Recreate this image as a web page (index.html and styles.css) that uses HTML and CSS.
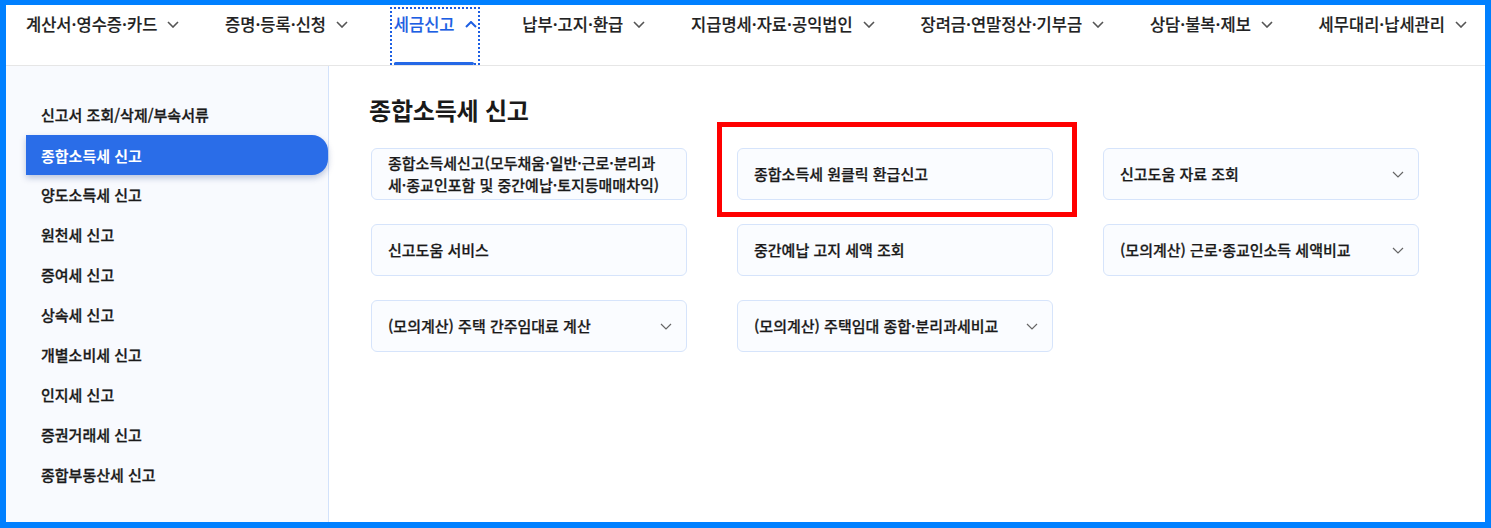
FILE: index.html
```html
<!DOCTYPE html>
<html lang="ko">
<head>
<meta charset="utf-8">
<title>세금신고</title>
<link rel="stylesheet" href="styles.css">
</head>
<body>
<div class="frame">
  <header class="gnb">
    <ul class="gnb-list">
      <li class="gnb-item"><span>계산서·영수증·카드</span><svg class="chev" viewBox="0 0 12 7"><path d="M1 1l5 5 5-5"/></svg></li>
      <li class="gnb-item"><span>증명·등록·신청</span><svg class="chev" viewBox="0 0 12 7"><path d="M1 1l5 5 5-5"/></svg></li>
      <li class="gnb-item active"><span>세금신고</span><svg class="chev up" viewBox="0 0 12 7"><path d="M1 6l5-5 5 5"/></svg></li>
      <li class="gnb-item"><span>납부·고지·환급</span><svg class="chev" viewBox="0 0 12 7"><path d="M1 1l5 5 5-5"/></svg></li>
      <li class="gnb-item"><span>지급명세·자료·공익법인</span><svg class="chev" viewBox="0 0 12 7"><path d="M1 1l5 5 5-5"/></svg></li>
      <li class="gnb-item"><span>장려금·연말정산·기부금</span><svg class="chev" viewBox="0 0 12 7"><path d="M1 1l5 5 5-5"/></svg></li>
      <li class="gnb-item"><span>상담·불복·제보</span><svg class="chev" viewBox="0 0 12 7"><path d="M1 1l5 5 5-5"/></svg></li>
      <li class="gnb-item"><span>세무대리·납세관리</span><svg class="chev" viewBox="0 0 12 7"><path d="M1 1l5 5 5-5"/></svg></li>
    </ul>
  </header>
  <div class="body">
    <nav class="side">
      <ul class="side-list">
        <li class="side-item">신고서 조회/삭제/부속서류</li>
        <li class="side-item on">종합소득세 신고</li>
        <li class="side-item">양도소득세 신고</li>
        <li class="side-item">원천세 신고</li>
        <li class="side-item">증여세 신고</li>
        <li class="side-item">상속세 신고</li>
        <li class="side-item">개별소비세 신고</li>
        <li class="side-item">인지세 신고</li>
        <li class="side-item">증권거래세 신고</li>
        <li class="side-item">종합부동산세 신고</li>
      </ul>
    </nav>
    <main class="content">
      <h2 class="title">종합소득세 신고</h2>
      <div class="cards">
        <div class="card"><span class="card-text">종합소득세신고(모두채움·일반·근로·분리과<br>세·종교인포함 및 중간예납·토지등매매차익)</span></div>
        <div class="card"><span class="card-text">종합소득세 원클릭 환급신고</span></div>
        <div class="card"><span class="card-text">신고도움 자료 조회</span><svg class="cchev" viewBox="0 0 12 7"><path d="M1 1l5 5 5-5"/></svg></div>
        <div class="card"><span class="card-text">신고도움 서비스</span></div>
        <div class="card"><span class="card-text">중간예납 고지 세액 조회</span></div>
        <div class="card"><span class="card-text">(모의계산) 근로·종교인소득 세액비교</span><svg class="cchev" viewBox="0 0 12 7"><path d="M1 1l5 5 5-5"/></svg></div>
        <div class="card"><span class="card-text">(모의계산) 주택 간주임대료 계산</span><svg class="cchev" viewBox="0 0 12 7"><path d="M1 1l5 5 5-5"/></svg></div>
        <div class="card"><span class="card-text">(모의계산) 주택임대 종합·분리과세비교</span><svg class="cchev" viewBox="0 0 12 7"><path d="M1 1l5 5 5-5"/></svg></div>
      </div>
      <div class="highlight"></div>
    </main>
  </div>
</div>
</body>
</html>
```

FILE: styles.css
```css
* { box-sizing: border-box; margin: 0; padding: 0; }
html, body { width: 1491px; height: 528px; overflow: hidden; }
body {
  font-family: "Noto Sans CJK KR", "Noto Sans", sans-serif;
  color: #222;
  background: #fff;
}
ul { list-style: none; }

.frame {
  width: 1491px;
  height: 528px;
  border: 6px solid #0080ff;
  border-top-width: 5px;
  display: flex;
  flex-direction: column;
}

.gnb {
  height: 61px;
  border-bottom: 1px solid #e6e6e6;
  flex: none;
}
.gnb-list {
  display: flex;
  justify-content: space-between;
  padding: 0 18px 0 20px;
  height: 60px;
}
.gnb-item {
  position: relative;
  display: flex;
  align-items: flex-start;
  padding-top: 7px;
  font-size: 16.5px;
  line-height: 24px;
  letter-spacing: 0;
  font-weight: 500;
  color: #222;
  white-space: nowrap;
  -webkit-text-stroke: 0.15px currentColor;
}
.chev {
  width: 12px;
  height: 7px;
  margin: 9px 0 0 10px;
  fill: none;
  stroke: #555;
  stroke-width: 1.6;
}
.gnb-item.active { color: #1d5fe3; }
.gnb-item.active .chev { stroke: #1d5fe3; stroke-width: 2; }
.gnb-item.active::before {
  content: "";
  position: absolute;
  left: -4px;
  right: -3px;
  top: 2px;
  bottom: 0;
  border: 2px dotted #1d5fe3;
}
.gnb-item.active::after {
  content: "";
  position: absolute;
  left: 0;
  right: 3px;
  bottom: 0;
  height: 3px;
  border-radius: 2px;
  background: #2468e6;
}

.body {
  flex: 1;
  display: flex;
  min-height: 0;
}
.side {
  width: 323px;
  flex: none;
  background: #f8fafe;
  border-right: 1px solid #d3e2fb;
  padding-top: 28px;
}
.side-item {
  margin-left: 20px;
  height: 40px;
  padding-left: 15px;
  display: flex;
  align-items: center;
  font-size: 15px;
  font-weight: 500;
  letter-spacing: 0;
  color: #1a1a1a;
  -webkit-text-stroke: 0.3px currentColor;
}
.side-item.on {
  margin-top: 1px;
  margin-bottom: -1px;
  background: #2a6de8;
  color: #fff;
  font-weight: 700;
  -webkit-text-stroke: 0;
  border-radius: 0 16px 16px 0;
  box-shadow: 0 3px 6px rgba(0, 40, 120, 0.25);
}

.content {
  flex: 1;
  position: relative;
  padding: 28px 0 0 42px;
}
.title {
  font-size: 24px;
  line-height: 32px;
  font-weight: 700;
  letter-spacing: -0.2px;
  margin-left: -2px;
  color: #1a1a1a;
}
.cards {
  margin-top: 22px;
  display: grid;
  grid-template-columns: repeat(3, 316px);
  grid-auto-rows: 52px;
  column-gap: 50px;
  row-gap: 24px;
}
.card {
  display: flex;
  align-items: center;
  justify-content: space-between;
  padding: 0 14px 0 16px;
  background: #fafcff;
  border: 1px solid #d6e4fb;
  border-radius: 6px;
}
.card-text {
  font-size: 15px;
  line-height: 22px;
  font-weight: 500;
  letter-spacing: 0;
  color: #1a1a1a;
  -webkit-text-stroke: 0.25px currentColor;
}
.cchev {
  width: 12px;
  height: 7px;
  fill: none;
  stroke: #666;
  stroke-width: 1.2;
  flex: none;
}

.highlight {
  position: absolute;
  left: 388px;
  top: 56px;
  width: 360px;
  height: 95px;
  border: 5px solid #ff0000;
}
```
